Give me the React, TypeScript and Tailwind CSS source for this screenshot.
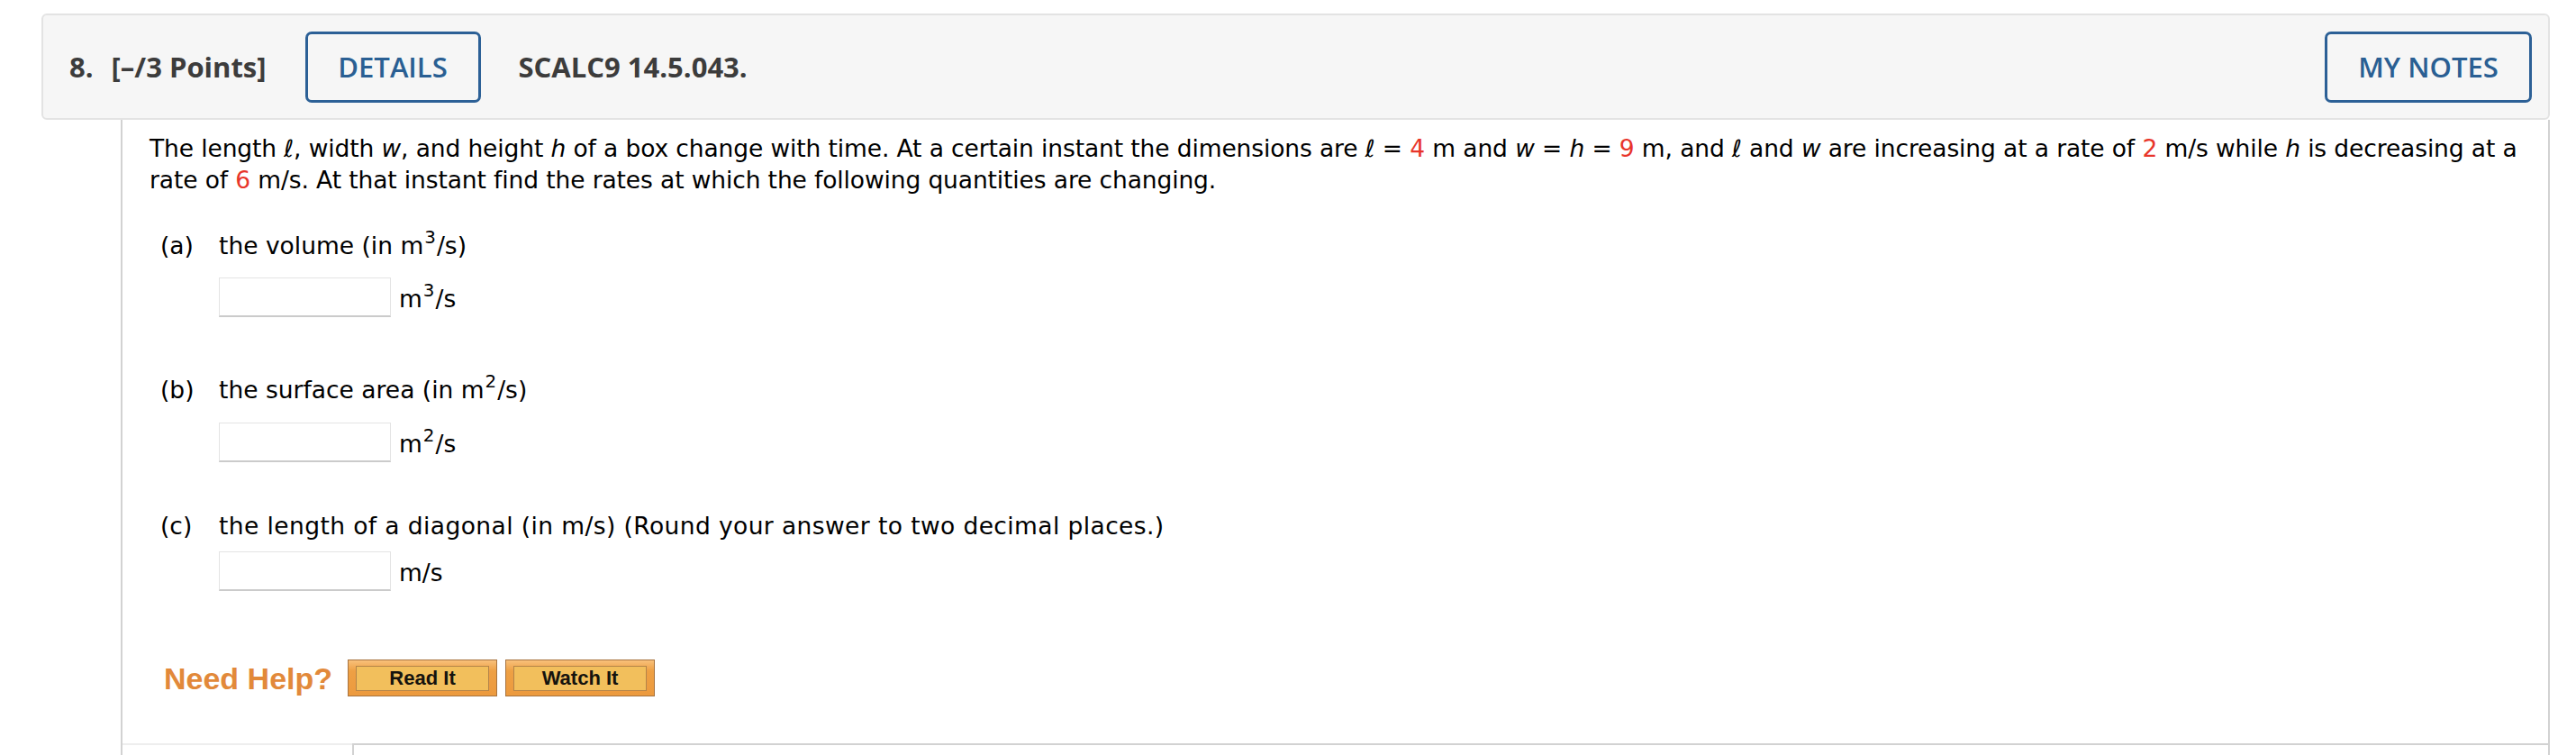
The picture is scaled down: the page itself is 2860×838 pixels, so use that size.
import React from 'react';

const headFont = { fontFamily: '"Open Sans", "Noto Sans", sans-serif' };
const arial = { fontFamily: '"Liberation Sans", Arial, sans-serif' };

function Red({ children }: { children: React.ReactNode }) {
  return <span className="text-[#e8352a]">{children}</span>;
}

function Sup({ children }: { children: React.ReactNode }) {
  return <sup className="top-[-0.6em] ml-[1px] mr-[1px]">{children}</sup>;
}

function AnswerRow({ unit, mt }: { unit: React.ReactNode; mt: string }) {
  return (
    <div className={`flex items-center ${mt} pl-[77px]`}>
      <div className="w-[191px] h-[44px] bg-white border border-[#e4e4e4] border-b-2 border-b-[#cbcbcb]" />
      <span className="ml-[9px] pt-[3px] leading-[35px]">{unit}</span>
    </div>
  );
}

function HelpButton({ label }: { label: string }) {
  return (
    <div className="w-[166px] h-[41px] border border-[#a7733f] bg-[linear-gradient(#f8c07a,#eea044_30%,#ec9a3e)] px-[8px] pt-[6px] pb-[5px]">
      <div
        className="h-full border border-[#b48449] bg-[#f2bf5c] flex items-center justify-center text-[22px] font-bold text-[#15130e] leading-none"
        style={arial}
      >
        {label}
      </div>
    </div>
  );
}

export default function App() {
  return (
    <div className="w-[2860px] h-[838px] overflow-hidden bg-white pl-[46px] pr-[29px] pt-[15px]">
      {/* Question header */}
      <div
        className="h-[118px] flex items-center bg-[#f6f6f6] border-2 border-[#e3e3e3] rounded-[6px] pl-[29px] pr-[18px] text-[#3c3c3c]"
        style={headFont}
      >
        <span className="text-[31px] font-bold">8.</span>
        <span className="ml-[20px] text-[31px] font-bold">[–/3 Points]</span>
        <button className="ml-[43px] w-[195px] h-[79px] border-[3px] border-[#2c6096] rounded-[7px] text-[31px] font-semibold text-[#2a5f93]">
          DETAILS
        </button>
        <span className="ml-[42px] text-[31px] font-bold">SCALC9 14.5.043.</span>
        <button className="ml-auto w-[230px] h-[79px] border-[3px] border-[#2c6096] rounded-[7px] text-[31px] font-semibold text-[#2a5f93]">
          MY NOTES
        </button>
      </div>

      {/* Question body */}
      <div
        className="ml-[88px] border-l-2 border-r-2 border-[#d2d2d2] h-[705px] flex flex-col text-[26.5px] text-black"
        style={{ fontFamily: '"DejaVu Sans", Verdana, sans-serif' }}
      >
        <div className="pl-[30px] pr-[16px] pt-[14px]">
          <p className="leading-[35px] whitespace-nowrap tracking-[-0.12px]">
            The length ℓ, width <i>w</i>, and height <i>h</i> of a box change with time. At a certain instant the
            dimensions are ℓ = <Red>4</Red> m and <i>w</i> = <i>h</i> = <Red>9</Red> m, and ℓ and <i>w</i> are
            increasing at a rate of <Red>2</Red> m/s while <i>h</i> is decreasing at a
            <br />
            rate of <Red>6</Red> m/s. At that instant find the rates at which the following quantities are changing.
          </p>

          <div className="mt-[38px] flex leading-[35px] pl-[12px]">
            <span className="w-[65px]">(a)</span>
            <span>
              the volume (in m<Sup>3</Sup>/s)
            </span>
          </div>
          <AnswerRow mt="mt-[18px]" unit={<>m<Sup>3</Sup>/s</>} />

          <div className="mt-[63px] flex leading-[35px] pl-[12px]">
            <span className="w-[65px]">(b)</span>
            <span>
              the surface area (in m<Sup>2</Sup>/s)
            </span>
          </div>
          <AnswerRow mt="mt-[19px]" unit={<>m<Sup>2</Sup>/s</>} />

          <div className="mt-[53px] flex leading-[35px] pl-[12px]">
            <span className="w-[65px]">(c)</span>
            <span className="tracking-[0.4px]">
              the length of a diagonal (in m/s) (Round your answer to two decimal places.)
            </span>
          </div>
          <AnswerRow mt="mt-[11px]" unit="m/s" />

          <div className="mt-[76px] flex items-center pl-[16px]">
            <span className="text-[34px] font-bold leading-none text-[#e2893a] mr-[17px]" style={arial}>
              Need Help?
            </span>
            <HelpButton label="Read It" />
            <div className="w-[9px]" />
            <HelpButton label="Watch It" />
          </div>
        </div>

        <div className="mt-auto flex h-[13px]">
          <div className="w-[255px] border-t-2 border-[#eeeeee]" />
          <div className="flex-1 border-t-2 border-l-2 border-[#d2d2d2]" />
        </div>
      </div>
    </div>
  );
}
